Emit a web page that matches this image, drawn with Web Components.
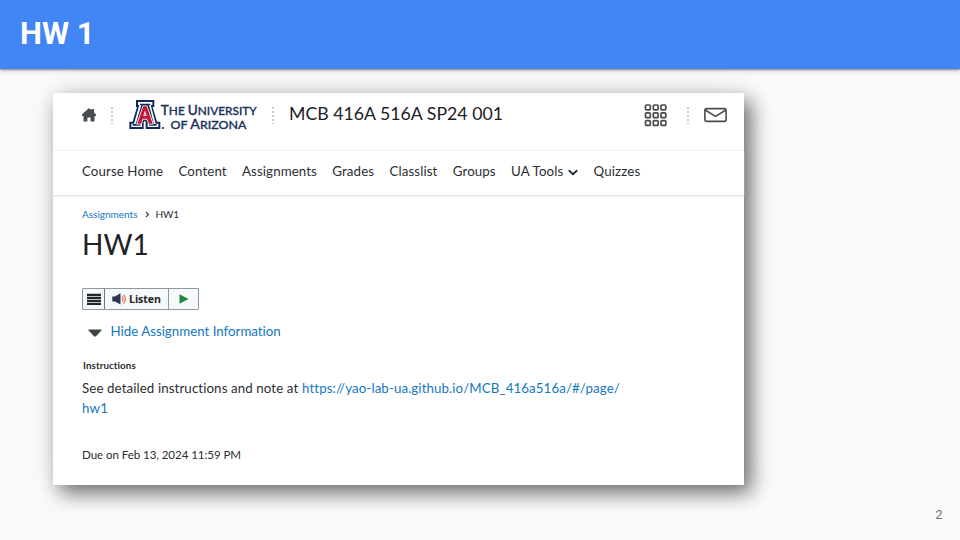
<!DOCTYPE html>
<html lang="en">
<head>
<meta charset="utf-8">
<title>HW 1</title>
<style>
html,body{margin:0;height:100%;overflow:hidden}
body{font-family:Lato,"Liberation Sans",sans-serif;color:#2b2e31}
</style>
</head>
<body>
<slide-page>
  <slide-title slot="title">HW 1</slide-title>
  <course-card>
    <card-header></card-header>
    <card-nav></card-nav>
    <assignment-body></assignment-body>
  </course-card>
  <span slot="number">2</span>
</slide-page>
<script>
function define(name, html, init){
  const t=document.createElement('template');
  t.innerHTML=html;
  customElements.define(name,class extends HTMLElement{
    constructor(){super();this.attachShadow({mode:'open'}).append(t.content.cloneNode(true));}
    connectedCallback(){if(init)init(this);}
  });
}

/* One line of text; "w" is the advance width its letters are spaced to fill. */
define('fit-text',`<style>
:host{display:block;white-space:nowrap;flex:none}
span{display:inline-block;white-space:pre}
</style><span><slot></slot></span>`,el=>{
  const w=+el.getAttribute('w'), s=el.shadowRoot.querySelector('span');
  el.style.fontSize=el.getAttribute('size')+'px';
  if(!w)return;
  const n=el.textContent.length;
  s.style.letterSpacing=((w-s.getBoundingClientRect().width)/n)+'px';
  el.style.width=w+'px';
});

define('slide-title',`<style>
:host{display:flex;align-items:center;box-sizing:border-box;height:69px;padding:0 0 2px 20px;background:#4285f4;color:#fff;font:700 31px/36px Roboto,sans-serif;box-shadow:0 1px 2px rgba(0,0,0,.42),0 2px 6px rgba(0,0,0,.13);position:relative}
</style><fit-text size="31" w="72"><slot></slot></fit-text>`);

define('slide-page',`<style>
:host{display:flex;flex-direction:column;width:960px;height:540px;background:#fafafa}
main{padding:24px 0 0 53px;flex:1}
footer{display:flex;justify-content:flex-end;padding:0 17.5px 17px 0;font:13px/16px Roboto,sans-serif;color:#757575}
</style><slot name="title"></slot><main><slot></slot></main><footer><slot name="number"></slot></footer>`);

define('course-card',`<style>
:host{display:flex;flex-direction:column;width:691px;height:392px;background:#fff;box-shadow:7px 8px 19px rgba(0,0,0,.55),0 0 26px rgba(0,0,0,.08)}
</style><slot></slot>`);

define('dot-rule',`<style>:host{display:block;flex:none}svg{display:block}</style>
<svg width="2" height="18" viewBox="0 0 2 18"><path d="M1 1V18" stroke="#c3cbd5" stroke-width="2" stroke-dasharray="2 2"/></svg>`);

define('ua-logo',`<style>:host{display:block;flex:none}svg{display:block;overflow:visible}text{font-family:Lato,sans-serif;font-weight:500;fill:#17305a;stroke:#17305a;stroke-width:.3}</style>
<svg width="130" height="34" viewBox="128 98 130 34">
<g transform="translate(50 90) scale(.33333)">
<path fill="#10295a" d="M258 30H313V51H308L321 95H331V117H287V97L286 94H282L281 97V117H238V95H248L261 51H258Z"/>
<path fill="#fff" d="M264 36H307V45H302L317 101H325V111H293V101H297L292 88H277L273 101H276V111H244V101H252L268 45H264Z"/>
<path fill="#10295a" d="M270 41H301V45H297L312 102H320V107H297V102H301L295 82H274L268 102H272V107H248V102H257L274 45H270Z"/>
<path fill="#c41230" stroke="#fff" stroke-width="5" paint-order="stroke" d="M280 49H290L308 101H297L291 86H278L273 101H262ZM285 61L280 78H290Z" fill-rule="evenodd"/>
</g>
<circle cx="163" cy="128" r="1.1" fill="#17305a"/>
<text x="160.800" y="114.500" textLength="96" lengthAdjust="spacingAndGlyphs" font-size="13.8">T<tspan font-size="12">HE </tspan>U<tspan font-size="12">NIVERSITY</tspan></text>
<text x="170.500" y="128.900" textLength="76" lengthAdjust="spacingAndGlyphs" font-size="13.6"><tspan font-size="12">OF </tspan>A<tspan font-size="12">RIZONA</tspan></text>
</svg>`);

define('card-header',`<style>
:host{display:flex;height:57px;border-bottom:1px solid #f1f1f2;align-items:flex-start;box-sizing:content-box}
svg{display:block;flex:none}
.home{margin:15px 0 0 29px}
.r1{margin:13px 0 0 15px}.logo{margin:5px 0 0 15px}.r2{margin:13px 0 0 13.5px}
.name{margin:10px 0 0 15.5px;line-height:22px;color:#202124}
.apps{margin:11px 0 0 auto}.r3{margin:13px 0 0 20px}.mail{margin:14px 17.5px 0 15px}
</style>
<svg class="home" width="14" height="14" viewBox="0 0 14 14"><path fill="#494c4e" d="M7 0L9.5 2.3V1H12V4.6L14 6.6V8H12.5V13Q12.5 13.5 12 13.5H8.6V9.5H5.4V13.5H2Q1.5 13.5 1.5 13V8H0V6.6Z"/></svg>
<dot-rule class="r1"></dot-rule>
<ua-logo class="logo"></ua-logo>
<dot-rule class="r2"></dot-rule>
<fit-text class="name" size="17.7" w="214">MCB 416A 516A SP24 001</fit-text>
<svg class="apps" width="23" height="23" viewBox="0 0 23 23"><defs><g id="r"><rect x="1.5" y="1" width="4.8" height="4.8" rx="1"/><rect x="9.3" y="1" width="4.8" height="4.8" rx="1"/><rect x="17" y="1" width="4.8" height="4.8" rx="1"/></g></defs><g fill="none" stroke="#494c4e" stroke-width="1.7"><use href="#r"/><use href="#r" y="7.9"/><use href="#r" y="15.6"/></g></svg>
<dot-rule class="r3"></dot-rule>
<svg class="mail" width="23" height="16" viewBox="0 0 23 16"><g fill="none" stroke="#494c4e" stroke-width="1.6"><rect x=".9" y="1.6" width="21.2" height="12.8" rx="1.8"/><path d="M1.2 3L11.500 9.400L21.800 3"/></g></svg>`);

define('card-nav',`<style>
:host{display:flex;height:44px;border-bottom:1px solid #e5e6e7;box-shadow:0 1px 1px #f2f2f2;padding-left:29px;line-height:20px}
fit-text{margin:10px 15.25px 0 0}
svg{margin:18px 15.7px 0 -11px;display:block;flex:none}
</style>
<fit-text size="13.3" w="81.2">Course Home</fit-text><fit-text size="13.3" w="48.3">Content</fit-text><fit-text size="13.3" w="75">Assignments</fit-text><fit-text size="13.3" w="42">Grades</fit-text><fit-text size="13.3" w="48">Classlist</fit-text><fit-text size="13.3" w="43">Groups</fit-text><fit-text size="13.3" w="52.5">UA Tools</fit-text><svg width="10" height="8" viewBox="0 0 10 8"><path d="M1.3 1.8L5 5.2L8.7 1.8" fill="none" stroke="#2b2e31" stroke-width="1.9" stroke-linecap="round" stroke-linejoin="round"/></svg><fit-text size="13.3" w="47">Quizzes</fit-text>`);

define('listen-bar',`<style>
:host{display:flex;box-sizing:border-box;width:116.5px;height:22px;border:1px solid #8c97a1;border-radius:1px;background:#f5f9fc}
div{display:flex;align-items:center;box-sizing:border-box}
.m{width:22px;border-right:1px solid #6d7780;padding-left:4px}
.l{width:64px;border-right:1px solid #8c97a1;padding-left:7px;gap:2px;font:700 10.6px/20px "Open Sans",sans-serif;color:#222}
.p{padding-left:9.5px}
svg{display:block;flex:none}
</style>
<div class="m"><svg width="14" height="12" viewBox="0 0 14 12"><path d="M0 1.8H14M0 4.8H14M0 7.8H14M0 10.8H14" stroke="#24272a" stroke-width="2.3"/></svg></div>
<div class="l"><svg width="15" height="12" viewBox="0 0 15 12"><path d="M.3 3.5H3L8.5 .3V11.5L3 8.5H.3Z" fill="#2c3458"/><path d="M10 3.5Q11.7 6 10 8.5M11.7 1.600Q14.800 6 11.700 10.500" fill="none" stroke="#ef8360" stroke-width="1.4"/></svg><fit-text size="10.6" w="32">Listen</fit-text></div>
<div class="p"><svg width="10" height="10" viewBox="0 0 10 10"><path d="M.5 .2L9.500 5L.5 9.800Z" fill="#1f8740"/></svg></div>`);

define('assignment-body',`<style>
:host{display:block;padding:0 0 0 29px}
.row{display:flex}
.link{color:#1477c2}
.crumbs{padding-top:10px;line-height:16px}
.crumbs svg{margin:5px 6px 0 7px}
.h{margin-top:4px;line-height:36px;color:#202124}
listen-bar{margin-top:26px}
.hide{margin-top:11px;line-height:20px}
.hide svg{margin:7.5px 8.5px 0 6px}
.ins{margin:17px 0 0 1px;line-height:14px;font-weight:700}
.see{margin-top:6px;line-height:20px}
.due{margin-top:28px;line-height:18px}
svg{display:block;flex:none}
</style>
<div class="row crumbs"><fit-text class="link" size="10.1" w="55.500">Assignments</fit-text><svg width="5" height="7" viewBox="0 0 5 7"><path d="M1 1L3.500 3.500L1 6" fill="none" stroke="#3a3d40" stroke-width="1.1"/></svg><fit-text size="10.1" w="23.500">HW1</fit-text></div>
<fit-text class="h" size="28" w="67">HW1</fit-text>
<listen-bar></listen-bar>
<div class="row hide"><svg width="14" height="8" viewBox="0 0 14 8"><path d="M1 .5H13Q14.200 .5 13.400 1.500L8 7.200Q7 8 6 7.200L.6 1.500Q-.2 .5 1 .5Z" fill="#3f4346"/></svg><fit-text class="link" size="13.3" w="170.500">Hide Assignment Information</fit-text></div>
<fit-text class="ins" size="9.8" w="53">Instructions</fit-text>
<div class="row see"><fit-text size="13.3" w="220">See detailed instructions and note at </fit-text><fit-text class="link" size="13.3" w="317.500">https://yao-lab-ua.github.io/MCB_416a516a/#/page/</fit-text></div>
<fit-text class="link" size="13.3" w="26" style="line-height:20px">hw1</fit-text>
<fit-text class="due" size="11.6" w="159">Due on Feb 13, 2024 11:59 PM</fit-text>`);
</script>
</body>
</html>
